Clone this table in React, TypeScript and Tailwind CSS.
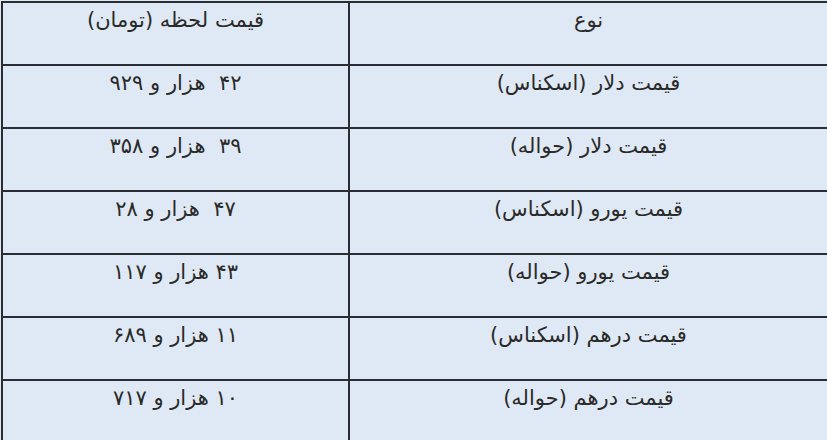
import React from 'react';

// نرخ ارز - جدول قیمت لحظه
const rows = [
  { type: 'قیمت دلار (اسکناس)', price: '۴۲  هزار و ۹۲۹' },
  { type: 'قیمت دلار (حواله)', price: '۳۹  هزار و ۳۵۸' },
  { type: 'قیمت یورو (اسکناس)', price: '۴۷  هزار و ۲۸' },
  { type: 'قیمت یورو (حواله)', price: '۴۳ هزار و ۱۱۷' },
  { type: 'قیمت درهم (اسکناس)', price: '۱۱ هزار و ۶۸۹' },
  { type: 'قیمت درهم (حواله)', price: '۱۰ هزار و ۷۱۷' },
];

const Row = ({ type, price }: { type: string; price: string }) => (
  <div className="grid h-[63px] grid-cols-[1fr_347px] border-b-2 border-[#2a2d31]">
    <div className="flex justify-center pt-[2px] whitespace-pre">{type}</div>
    <div className="flex justify-center border-r-2 border-[#2a2d31] pt-[2px] whitespace-pre">{price}</div>
  </div>
);

export default function App() {
  return (
    <div
      dir="rtl"
      className="h-[440px] w-[827px] overflow-hidden bg-[#dfe9f5] pl-px pt-px font-['DejaVu_Sans',sans-serif] text-[21px] leading-[30px] text-[#2a2a2a]"
    >
      <div className="border-l-2 border-t-2 border-[#2a2d31]">
        <Row type="نوع" price="قیمت لحظه (تومان)" />
        {rows.map((r) => (
          <Row key={r.type} type={r.type} price={r.price} />
        ))}
      </div>
    </div>
  );
}
